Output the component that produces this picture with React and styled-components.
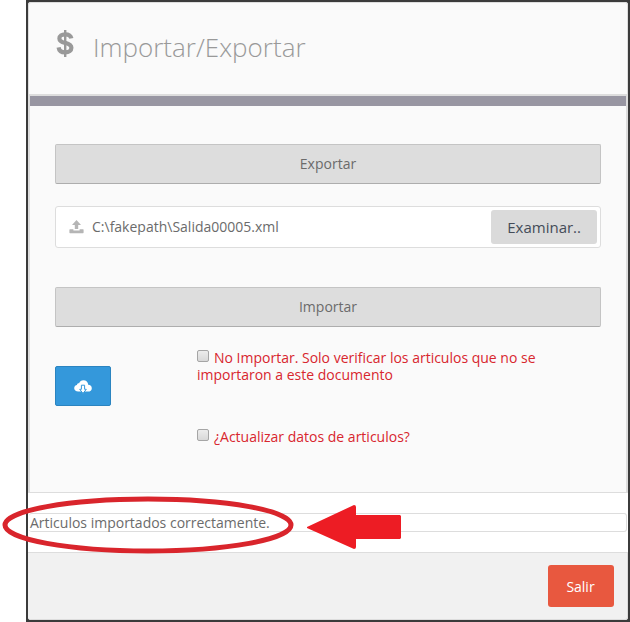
import React from "react";
import styled, { createGlobalStyle } from "styled-components";

const GlobalStyle = createGlobalStyle`
  * { box-sizing: border-box; }
  body {
    margin: 0;
    background: #fff;
    color: #6b6b6b;
    font: 14px/17px "Open Sans", sans-serif;
  }
  button, input { font: inherit; }
`;

const Backdrop = styled.div`
  margin-left: 26px;
  padding: 2px;
  background: #3b3b3b;
`;

const Dialog = styled.main`
  background: #fff;
  border-radius: 3px;
`;

const Header = styled.header`
  display: flex;
  gap: 18px;
  height: 94px;
  padding: 27px 26px 0;
  background: #fafafa;
  border: 1px solid #ddd;
  border-width: 1px 1px 2px;
  border-radius: 3px 3px 0 0;
`;

const Title = styled.h1`
  margin: 0;
  color: #999;
  font-size: 26px;
  font-weight: 300;
  line-height: 34px;
`;

const Body = styled.section`
  display: flex;
  flex-direction: column;
  padding: 0 25px 47px;
  background: #fafafa;
  border: solid #ddd;
  border-width: 0 2px 1px;
`;

const Bar = styled.div`
  height: 10px;
  margin: 0 -25px 38px;
  background: #9896a2;
`;

const WideButton = styled.button`
  height: 40px;
  padding: 0 0 2px;
  color: #6b6b6b;
  background: #ddd;
  border: 1px solid #c4c4c4;
  border-bottom-color: #adadad;
  border-radius: 2px;
`;

const FileField = styled.div`
  display: flex;
  align-items: center;
  gap: 8px;
  height: 42px;
  margin: 22px 0 39px;
  padding: 3px 3px 3px 13px;
  background: #fff;
  border: 1px solid #ddd;
  border-radius: 3px;
`;

const FileInput = styled.input`
  flex: 1;
  min-width: 0;
  padding: 0 0 2px;
  color: #6b6b6b;
  background: none;
  border: 0;
`;

const BrowseButton = styled.button`
  height: 34px;
  padding: 0 16px;
  color: #444c58;
  font-size: 15px;
  background: #dadada;
  border: 0;
  border-radius: 3px;
`;

const ImportRow = styled.div`
  display: grid;
  grid-template-columns: 142px 1fr;
  align-items: start;
  margin-top: 22px;
`;

const CloudButton = styled.button`
  display: flex;
  align-items: center;
  justify-content: center;
  width: 56px;
  height: 40px;
  margin-top: 17px;
  padding: 2px 0 0;
  background: #3498db;
  border: 1px solid #2b84c0;
  border-radius: 2px;
`;

const Options = styled.div`
  display: flex;
  flex-direction: column;
  gap: 45px;
`;

const Option = styled.label`
  color: #d8262e;
`;

const Checkbox = styled.input`
  appearance: none;
  width: 12px;
  height: 12px;
  margin: 0 5px 1px 0;
  background: linear-gradient(#ececec, #d8d8d8);
  border: 1px solid #a5a5a5;
  border-radius: 2px;

  &:checked { background: #3498db; }
`;

const Status = styled.div`
  position: relative;
  padding: 20px 1px;
`;

const Message = styled.output`
  display: block;
  height: 19px;
  padding: 0 1px;
  border: solid #ddd;
  border-width: 1px 1px 1px 0;
  border-radius: 3px;
`;

const Highlight = styled.svg`
  position: absolute;
  top: 1px;
  left: -28px;
  pointer-events: none;
`;

const Footer = styled.footer`
  display: flex;
  justify-content: flex-end;
  padding: 12px 13px;
  background: #f1f1f1;
  border: solid #ddd;
  border-width: 1px 1px 1px 0;
  border-radius: 0 0 3px 3px;
`;

const ExitButton = styled.button`
  width: 66px;
  height: 42px;
  padding: 0 1px 0 0;
  color: #fff;
  background: #e8583f;
  border: 0;
  border-radius: 3px;
`;

const DollarIcon = () => (
  <svg width="20" height="30" viewBox="0 0 20 30" fill="none" stroke="#999" aria-hidden="true">
    <path d="M16.4 8.4C15.8 5.8 13.6 4.3 10.2 4.3C6.6 4.3 4.4 5.9 4.4 8.4C4.4 11.2 6.6 12 10.2 12.9C14.2 13.9 16.4 14.9 16.4 17.8C16.4 20.6 14 22.4 10.2 22.4C6.2 22.4 4 20.4 3.6 17.4" strokeWidth="4.2" />
    <path d="M10.2 0v27" strokeWidth="2.4" />
  </svg>
);

const UploadIcon = () => (
  <svg width="15" height="14" viewBox="0 0 15 14" fill="#b5b5b5" aria-hidden="true">
    <path d="M7.5 0L12 5H9.2V9H5.8V5H3ZM1 9.2H4.4V10.4H10.6V9.2H14Q14.6 9.2 14.6 9.8V12.6Q14.6 13.2 14 13.2H1Q.4 13.2 .4 12.6V9.8Q.4 9.2 1 9.2Z" />
  </svg>
);

const CloudIcon = () => (
  <svg width="18" height="14" viewBox="0 0 18 14" aria-hidden="true">
    <path fill="#fff" d="M4.2 11.6C1.8 11.6.2 10.2.2 8.3C.2 6.5 1.4 5.4 3 5.1C3 3.8 4 3.1 5.1 3.3C5.8 1.3 7.4.3 9.4.3C12.2.3 14.1 2.4 14.2 4.8C16.4 4.9 17.8 6.3 17.8 8.2C17.8 10.3 16.3 11.6 14 11.6Z" />
    <path fill="#fff" stroke="#3498db" strokeWidth="1" d="M7.4 5.2H10.6V9.3H12.3L9 13.4L5.7 9.3H7.4Z" />
  </svg>
);

export default function App() {
  return (
    <>
      <GlobalStyle />
      <Backdrop>
        <Dialog>
          <Header>
            <DollarIcon />
            <Title>Importar/Exportar</Title>
          </Header>
          <Body>
            <Bar />
            <WideButton type="button">Exportar</WideButton>
            <FileField>
              <UploadIcon />
              <FileInput aria-label="Archivo" readOnly value={"C:\\fakepath\\Salida00005.xml"} />
              <BrowseButton type="button">Examinar..</BrowseButton>
            </FileField>
            <WideButton type="button">Importar</WideButton>
            <ImportRow>
              <CloudButton type="button" aria-label="Descargar">
                <CloudIcon />
              </CloudButton>
              <Options>
                <Option>
                  <Checkbox type="checkbox" />
                  No Importar. Solo verificar los articulos que no se importaron a este documento
                </Option>
                <Option>
                  <Checkbox type="checkbox" />
                  ¿Actualizar datos de articulos?
                </Option>
              </Options>
            </ImportRow>
          </Body>
          <Status>
            <Message>Articulos importados correctamente.</Message>
            <Highlight width="404" height="62" viewBox="0 0 404 62" aria-hidden="true">
              <ellipse cx="148" cy="31" rx="143" ry="26" fill="none" stroke="#d9252c" strokeWidth="5" />
              <path fill="#ed1c24" d="M307 33L354 11Q356 11 356 13V21H400L401 22V44L400 45H356V53Q356 55 354 55L307 34Z" />
            </Highlight>
          </Status>
          <Footer>
            <ExitButton type="button">Salir</ExitButton>
          </Footer>
        </Dialog>
      </Backdrop>
    </>
  );
}
